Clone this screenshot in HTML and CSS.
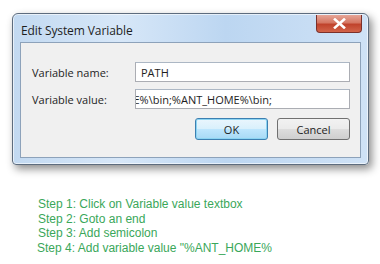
FILE: index.html
```html
<!DOCTYPE html>
<html lang="en">
  <head>
    <meta charset="UTF-8" />
    <title>Edit System Variable</title>
    <link rel="stylesheet" href="styles.css">
  </head>

  <body>
    <div class="dialog">
      <div class="titleBar">
        <span class="titleText">Edit System Variable</span>
        <span class="closeBtn">
          <svg width="13" height="11" viewBox="0 0 13 11">
            <path d="M2 1.5 L11 9.5 M11 1.5 L2 9.5" stroke="#fff" stroke-width="2.6" stroke-linecap="square" />
          </svg>
        </span>
      </div>

      <div class="clientPane">
        <div class="fieldRow">
          <span class="fieldLabel">Variable name:</span>
          <div class="textBox">PATH</div>
        </div>
        <div class="fieldRow">
          <span class="fieldLabel">Variable value:</span>
          <div class="textBox scrolled"><span>%SystemRoot%;%JAVA_HOME%\bin;%ANT_HOME%\bin;</span></div>
        </div>
        <div class="buttonRow">
          <span class="btn btnDefault">OK</span>
          <span class="btn">Cancel</span>
        </div>
      </div>
    </div>

    <div class="steps">
      <p>Step 1: Click on Variable value textbox</p>
      <p>Step 2: Goto an end</p>
      <p>Step 3: Add semicolon</p>
      <p class="lastStep">Step 4: Add variable value "%ANT_HOME%</p>
    </div>
  </body>
</html>
```

FILE: styles.css
```css
*,
*:before,
*:after {
  margin: 0;
  padding: 0;
  box-sizing: border-box;
}

body {
  width: 380px;
  height: 264px;
  background-color: #fff;
  font-family: "Open Sans", "DejaVu Sans", sans-serif;
  overflow: hidden;
}

/* -- window frame */
.dialog {
  width: 357px;
  height: 152px;
  margin: 13px 0 0 12px;
  padding: 0 7px 6px 7px;
  display: flex;
  flex-direction: column;
  border: 1px solid #5d6c7e;
  border-radius: 6px 6px 4px 4px;
  background: linear-gradient(90deg, #c2d9f1 0%, #d7e7f8 30%, #bcd6f1 60%, #cfe2f6 100%);
  box-shadow: 3px 4px 9px rgba(0, 0, 0, 0.45), inset 0 0 0 1px rgba(255, 255, 255, 0.6);
}

.titleBar {
  height: 28px;
  display: flex;
  align-items: flex-start;
  justify-content: space-between;
}

.titleText {
  margin: 8px 0 0 1px;
  font-size: 12px;
  color: #1e1e1e;
  letter-spacing: -0.1px;
}

.closeBtn {
  width: 46px;
  height: 18px;
  margin: 1px -1px 0 0;
  display: flex;
  align-items: center;
  justify-content: center;
  border: 1px solid #7b302a;
  border-top: 0;
  border-radius: 0 0 4px 4px;
  background: linear-gradient(180deg, #e6a597 0%, #d57763 45%, #c0432c 55%, #d2644a 100%);
}

/* -- inner pane */
.clientPane {
  flex: 1;
  padding: 19px 10px 0 11px;
  border: 1px solid #8da2ba;
  background-color: #f0f0f0;
}

.fieldRow {
  height: 20px;
  margin-bottom: 7px;
  display: flex;
  align-items: center;
}

.fieldLabel {
  width: 103px;
  font-size: 11px;
  color: #1e1e1e;
}

.textBox {
  flex: 1;
  height: 20px;
  padding: 2px 4px 0 5px;
  font-size: 11px;
  color: #1e1e1e;
  white-space: nowrap;
  overflow: hidden;
  background-color: #fff;
  border: 1px solid #abadb3;
  border-top-color: #acb7c4;
}

.scrolled {
  display: flex;
  justify-content: flex-end;
  padding-right: 77px;
}

.buttonRow {
  margin-top: 9px;
  display: flex;
  justify-content: flex-end;
  gap: 9px;
}

.btn {
  width: 73px;
  height: 22px;
  display: flex;
  align-items: center;
  justify-content: center;
  font-size: 11px;
  color: #1e1e1e;
  border: 1px solid #707070;
  border-radius: 3px;
  background: linear-gradient(180deg, #f2f2f2 0%, #ebebeb 48%, #dddddd 52%, #cfcfcf 100%);
}

.btnDefault {
  border-color: #3c7fb1;
  box-shadow: inset 0 0 0 1px #8cd4f2;
  background: linear-gradient(180deg, #eaf6fd 0%, #d9f0fc 48%, #bee6fd 52%, #a7d9f5 100%);
}

/* -- instructions */
.steps {
  margin: 32px 0 0 38px;
  font-family: "Liberation Sans", Arial, sans-serif;
  font-size: 12px;
  line-height: 14.5px;
  color: #3aa75a;
}

.lastStep {
  margin-left: -1px;
}
```
